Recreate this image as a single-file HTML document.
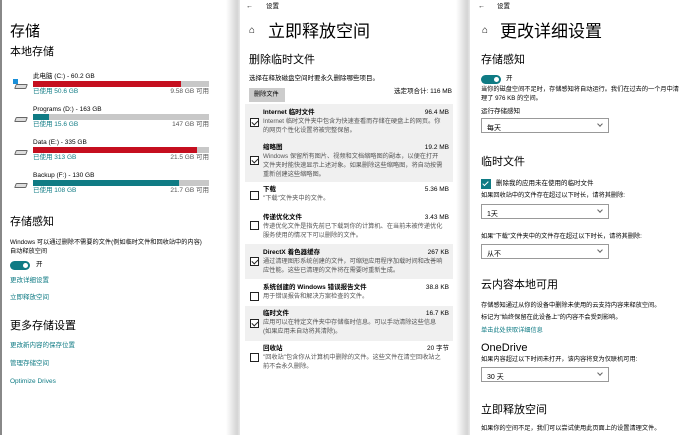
<!DOCTYPE html>
<html><head><meta charset="utf-8"><style>
*{margin:0;padding:0;box-sizing:border-box}
body{width:698px;height:435px;overflow:hidden;background:#fff;position:relative;font-family:"Liberation Sans","Noto Sans CJK SC",sans-serif;color:#000}
.t{position:absolute;white-space:nowrap;line-height:1}
.s7{font-size:7px}.s6{font-size:6.5px}.s5{font-size:6.2px}
.teal{color:#0f7b84}
.g{color:#555}
.bar{position:absolute;height:6px;background:#c8c8c8;left:33px;width:176px}
.bar i{position:absolute;left:0;top:0;bottom:0}
.cb{position:absolute;width:9px;height:9px;border:1px solid #222;background:#fff}
.cb.on::after{content:"";position:absolute;left:2px;top:0px;width:3px;height:5px;border:solid #222;border-width:0 1px 1px 0;transform:rotate(45deg)}
.gray{position:absolute;background:#f0f0f0}
.dd{position:absolute;left:481px;width:128px;height:15px;border:1px solid #999;background:#fff}
.dd span{position:absolute;left:5px;top:4px;font-size:7px}
.dd b{position:absolute;right:6px;top:3px;width:4px;height:4px;border:solid #666;border-width:0 1px 1px 0;transform:rotate(45deg)}
.tog{position:absolute;width:20px;height:9px;border-radius:5px;background:#0f7b84}
.tog::after{content:"";position:absolute;right:2px;top:2px;width:5px;height:5px;border-radius:50%;background:#fff}
.drv{position:absolute;width:12px;height:5px;background:#ddd;border:1px solid #666;border-radius:1px;transform:skewX(-20deg)}
.r{text-align:right}
</style></head><body>
<div style="position:absolute;left:0;top:0;width:2px;height:435px;background:#888"></div>
<div style="position:absolute;left:226px;top:0;width:14px;height:435px;background:linear-gradient(90deg,#fff,#d4d4d4 80%,#e8e8e8)"></div>
<div style="position:absolute;left:456px;top:0;width:14px;height:435px;background:linear-gradient(90deg,#fff,#d4d4d4 80%,#e8e8e8)"></div>

<!-- LEFT -->
<div class="t" style="left:10px;top:24px;font-size:15px">存储</div>
<div class="t" style="left:10px;top:47px;font-size:11px">本地存储</div>

<div style="position:absolute;left:13px;top:79px;width:5px;height:5px;background:#1a8fd8"></div>
<div class="drv" style="left:15px;top:84px"></div>
<div class="t s6" style="left:33px;top:74px">此电脑 (C:) - 60.2 GB</div>
<div class="bar" style="top:81px"><i style="width:148px;background:#c50f1f"></i></div>
<div class="t s6 teal" style="left:33px;top:89px">已使用 50.6 GB</div>
<div class="t s6 g r" style="left:150px;top:89px;width:59px">9.58 GB 可用</div>

<div class="drv" style="left:15px;top:117px"></div>
<div class="t s6" style="left:33px;top:107px">Programs (D:) - 163 GB</div>
<div class="bar" style="top:114px"><i style="width:16px;background:#0f7b84"></i></div>
<div class="t s6 teal" style="left:33px;top:122px">已使用 15.6 GB</div>
<div class="t s6 g r" style="left:150px;top:122px;width:59px">147 GB 可用</div>

<div class="drv" style="left:15px;top:150px"></div>
<div class="t s6" style="left:33px;top:140px">Data (E:) - 335 GB</div>
<div class="bar" style="top:147px"><i style="width:164px;background:#c50f1f"></i></div>
<div class="t s6 teal" style="left:33px;top:155px">已使用 313 GB</div>
<div class="t s6 g r" style="left:150px;top:155px;width:59px">21.5 GB 可用</div>

<div class="drv" style="left:15px;top:183px"></div>
<div class="t s6" style="left:33px;top:173px">Backup (F:) - 130 GB</div>
<div class="bar" style="top:180px"><i style="width:146px;background:#0f7b84"></i></div>
<div class="t s6 teal" style="left:33px;top:188px">已使用 108 GB</div>
<div class="t s6 g r" style="left:150px;top:188px;width:59px">21.7 GB 可用</div>

<div class="t" style="left:10px;top:217px;font-size:11px">存储感知</div>
<div class="t s5" style="left:10px;top:240px">Windows 可以通过删除不需要的文件(例如临时文件和回收站中的内容)</div>
<div class="t s5" style="left:10px;top:249px">自动释放空间</div>
<div class="tog" style="left:10px;top:261px"></div>
<div class="t s6" style="left:36px;top:262px">开</div>
<div class="t s6 teal" style="left:10px;top:278px">更改详细设置</div>
<div class="t s6 teal" style="left:10px;top:295px">立即释放空间</div>
<div class="t" style="left:10px;top:321px;font-size:11px">更多存储设置</div>
<div class="t s6 teal" style="left:10px;top:343px">更改新内容的保存位置</div>
<div class="t s6 teal" style="left:10px;top:361px">管理存储空间</div>
<div class="t s6 teal" style="left:10px;top:379px">Optimize Drives</div>

<!-- MIDDLE -->
<div class="t s7" style="left:246px;top:3px">←</div>
<div class="t s6" style="left:266px;top:4px">设置</div>
<div class="t" style="left:249px;top:26px;font-size:10px">⌂</div>
<div class="t" style="left:268px;top:23px;font-size:17px">立即释放空间</div>
<div class="t" style="left:249px;top:55px;font-size:11px">删除临时文件</div>
<div class="t s6" style="left:249px;top:76px">选择在释放磁盘空间时要永久删除哪些项目。</div>
<div style="position:absolute;left:249px;top:88px;width:36px;height:14px;background:#ccc"></div>
<div class="t s5" style="left:254px;top:92px">删除文件</div>
<div class="t s6 r" style="left:380px;top:89px;width:72px">选定项合计: 116 MB</div>

<div class="gray" style="left:245px;top:104px;width:208px;height:78px"></div>
<div class="gray" style="left:245px;top:244px;width:208px;height:35px"></div>
<div class="gray" style="left:245px;top:306px;width:208px;height:35px"></div>

<div class="t s6" style="left:263px;top:110px;font-weight:bold">Internet 临时文件</div>
<div class="t s6 r" style="left:400px;top:110px;width:49px">96.4 MB</div>
<div class="cb on" style="left:250px;top:118px"></div>
<div class="t s5 g" style="left:263px;top:119px">Internet 临时文件夹中包含为快速查看而存储在硬盘上的网页。你</div>
<div class="t s5 g" style="left:263px;top:128px">的网页个性化设置将被完整保留。</div>

<div class="t s6" style="left:263px;top:145px;font-weight:bold">缩略图</div>
<div class="t s6 r" style="left:400px;top:145px;width:49px">19.2 MB</div>
<div class="cb on" style="left:250px;top:156px"></div>
<div class="t s5 g" style="left:263px;top:154px">Windows 保留所有图片、视频和文档缩略图的副本，以便在打开</div>
<div class="t s5 g" style="left:263px;top:163px">文件夹时能快速显示上述对象。如果删除这些缩略图，将自动按需</div>
<div class="t s5 g" style="left:263px;top:172px">重新创建这些缩略图。</div>

<div class="t s6" style="left:263px;top:187px;font-weight:bold">下载</div>
<div class="t s6 r" style="left:400px;top:187px;width:49px">5.36 MB</div>
<div class="cb" style="left:250px;top:191px"></div>
<div class="t s5 g" style="left:263px;top:196px">"下载"文件夹中的文件。</div>

<div class="t s6" style="left:263px;top:215px;font-weight:bold">传递优化文件</div>
<div class="t s6 r" style="left:400px;top:215px;width:49px">3.43 MB</div>
<div class="cb" style="left:250px;top:221px"></div>
<div class="t s5 g" style="left:263px;top:224px">传递优化文件是指先前已下载到你的计算机、在当前未被传递优化</div>
<div class="t s5 g" style="left:263px;top:233px">服务使用的情况下可以删除的文件。</div>

<div class="t s6" style="left:263px;top:250px;font-weight:bold">DirectX 着色器缓存</div>
<div class="t s6 r" style="left:400px;top:250px;width:49px">267 KB</div>
<div class="cb on" style="left:250px;top:257px"></div>
<div class="t s5 g" style="left:263px;top:259px">通过清理图形系统创建的文件，可缩短应用程序加载时间和改善响</div>
<div class="t s5 g" style="left:263px;top:268px">应性能。这些已清理的文件将在需要时重新生成。</div>

<div class="t s6" style="left:263px;top:285px;font-weight:bold">系统创建的 Windows 错误报告文件</div>
<div class="t s6 r" style="left:400px;top:285px;width:49px">38.8 KB</div>
<div class="cb" style="left:250px;top:292px"></div>
<div class="t s5 g" style="left:263px;top:294px">用于错误报告和解决方案检查的文件。</div>

<div class="t s6" style="left:263px;top:311px;font-weight:bold">临时文件</div>
<div class="t s6 r" style="left:400px;top:311px;width:49px">16.7 KB</div>
<div class="cb on" style="left:250px;top:319px"></div>
<div class="t s5 g" style="left:263px;top:320px">应用可以在特定文件夹中存储临时信息。可以手动清除这些信息</div>
<div class="t s5 g" style="left:263px;top:329px">(如果应用未自动将其清除)。</div>

<div class="t s6" style="left:263px;top:346px;font-weight:bold">回收站</div>
<div class="t s6 r" style="left:400px;top:346px;width:49px">20 字节</div>
<div class="cb" style="left:250px;top:353px"></div>
<div class="t s5 g" style="left:263px;top:355px">"回收站"包含你从计算机中删除的文件。这些文件在清空回收站之</div>
<div class="t s5 g" style="left:263px;top:364px">前不会永久删除。</div>

<!-- RIGHT -->
<div class="t s7" style="left:478px;top:3px">←</div>
<div class="t s6" style="left:497px;top:4px">设置</div>
<div class="t" style="left:482px;top:26px;font-size:10px">⌂</div>
<div class="t" style="left:500px;top:23px;font-size:17px">更改详细设置</div>
<div class="t" style="left:481px;top:55px;font-size:11px">存储感知</div>
<div class="tog" style="left:481px;top:75px"></div>
<div class="t s6" style="left:506px;top:76px">开</div>
<div class="t s5" style="left:481px;top:87px">当你的磁盘空间不足时，存储感知将自动运行。我们在过去的一个月中清</div>
<div class="t s5" style="left:481px;top:96px">理了 976 KB 的空间。</div>
<div class="t s6" style="left:481px;top:109px">运行存储感知</div>
<div class="dd" style="top:118px"><span>每天</span><b></b></div>
<div class="t" style="left:481px;top:157px;font-size:11px">临时文件</div>
<div style="position:absolute;left:481px;top:179px;width:10px;height:10px;background:#0f7b84"></div>
<div style="position:absolute;left:484px;top:180px;width:3px;height:6px;border:solid #fff;border-width:0 1px 1px 0;transform:rotate(45deg)"></div>
<div class="t s6" style="left:496px;top:181px">删除我的应用未在使用的临时文件</div>
<div class="t s5" style="left:481px;top:193px">如果回收站中的文件存在超过以下时长，请将其删除:</div>
<div class="dd" style="top:204px"><span>1天</span><b></b></div>
<div class="t s5" style="left:481px;top:234px">如果"下载"文件夹中的文件存在超过以下时长，请将其删除:</div>
<div class="dd" style="top:244px"><span>从不</span><b></b></div>
<div class="t" style="left:481px;top:280px;font-size:11px">云内容本地可用</div>
<div class="t s5" style="left:481px;top:303px">存储感知通过从你的设备中删除未使用的云支持内容来释放空间。</div>
<div class="t s5" style="left:481px;top:315px">标记为"始终保留在此设备上"的内容不会受到影响。</div>
<div class="t s5 teal" style="left:481px;top:328px">单击此处获取详细信息</div>
<div class="t" style="left:481px;top:343px;font-size:11px">OneDrive</div>
<div class="t s5" style="left:481px;top:357px">如果内容超过以下时间未打开，该内容将变为仅联机可用:</div>
<div class="dd" style="top:367px"><span>30 天</span><b></b></div>
<div class="t" style="left:481px;top:405px;font-size:11px">立即释放空间</div>
<div class="t s5" style="left:481px;top:426px">如果你的空间不足，我们可以尝试使用此页面上的设置清理文件。</div>
</body></html>
